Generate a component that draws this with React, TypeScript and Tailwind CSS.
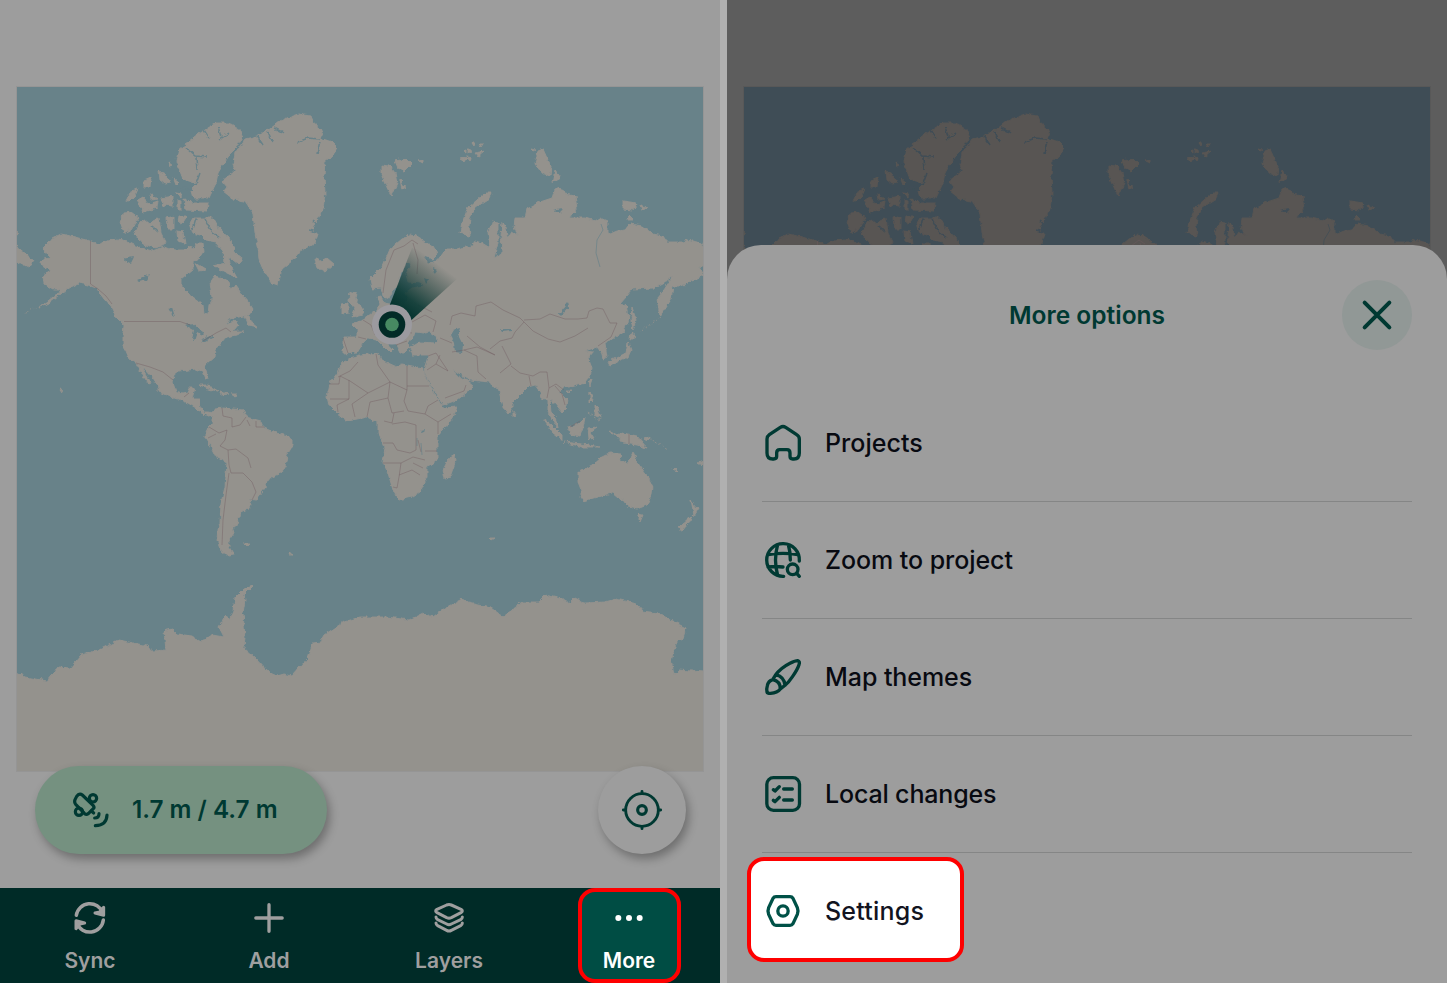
import React from "react";

const LAND = [
  // North and Central America
  "M61 234L66 235 75 237 82 239 90 241 98 244 104 242 112 240 118 239 126 241 134 245 140 247 145 249 152 251 158 249 163 246 170 249 176 250 184 250 188 246 194 249 197 243 203 243 204 252 200 258 193 262 193 269 181 279 181 286 188 293 198 301 203 305 204 313 208 314 209 305 212 299 211 289 210 282 214 276 223 278 229 283 231 289 236 286 243 296 249 303 253 309 249 315 238 317 229 319 226 324 234 320 238 325 233 331 244 331 236 335 226 337 221 343 216 350 215 357 206 365 205 368 208 378 205 379 202 371 196 369 188 370 179 371 174 375 173 383 176 392 182 394 187 393 189 388 195 388 193 395 192 399 200 399 200 407 203 412 209 412 213 413 216 408 224 407 233 409 243 410 246 417 261 421 264 428 276 433 288 436 293 440 293 445 287 455 285 467 281 473 271 477 267 482 265 488 256 500 249 499 251 505 249 509 241 511 240 517 236 518 238 521 233 530 234 533 229 540 229 547 234 555 228 556 221 550 217 540 218 530 220 523 221 503 225 487 227 463 216 457 211 447 206 438 206 433 209 427 213 423 213 415 207 416 201 412 196 408 188 403 179 399 173 398 159 392 159 387 153 378 146 370 142 367 151 383 149 384 144 377 141 372 136 363 129 359 126 352 123 347 123 333 124 325 116 317 111 307 104 299 96 288 88 285 79 283 73 286 68 288 66 292 59 295 49 303 39 308 48 301 58 293 60 289 53 289 44 284 43 276 51 271 41 264 43 259 51 258 43 249 49 243 53 238Z",
  // Greenland
  "M287 118L298 114 310 116 312 121 320 128 322 133 320 138 332 142 338 148 332 156 325 161 324 176 325 193 323 209 318 219 312 228 318 234 315 243 300 251 292 261 282 269 278 285 272 283 265 273 259 259 258 246 255 233 253 213 245 201 233 199 223 191 228 188 222 181 235 171 233 164 235 153 245 139 257 136 270 129 280 121Z",
  // Canadian Arctic
  "M216 123L229 123 241 131 243 136 236 148 228 156 218 173 216 183 209 198 193 198 191 191 198 184 183 179 176 161 179 149 188 143 199 134 208 128Z",
  "M184 199L193 203 208 203 207 211 186 210Z",
  "M193 218L213 218 219 229 229 238 236 253 242 258 238 264 228 256 231 267 237 278 223 271 213 266 224 263 223 251 216 243 206 241 200 235 193 233 190 223Z",
  "M123 213L131 212 139 218 131 229 124 233 121 224Z",
  "M139 223L145 220 150 224 153 221 159 218 161 233 166 243 156 248 143 244 134 234Z",
  "M126 201L131 191 138 189 135 196 129 202ZM136 201L143 197 149 204 158 201 157 208 144 212ZM144 181L151 178 150 187 144 187ZM159 171L165 174 171 183 165 184 160 180ZM173 177L179 182 176 185ZM161 198L173 196 173 206 163 205ZM176 193L182 194 181 197ZM177 200L181 201 181 210 177 210ZM179 216L187 216 182 224 178 222ZM166 218L174 216 174 229 168 229ZM177 231L183 232 185 244 178 242ZM195 263L206 270 199 271ZM169 163L172 165 170 166ZM151 194L157 199 152 200Z",
  "M315 259L320 261 327 258 334 264 325 272 317 268Z",
  "M199 385L208 385 218 391 208 389ZM220 392L229 394 221 395ZM232 394L236 394 235 396ZM245 316L249 316 252 323 258 328 249 326Z",
  // Svalbard and the Russian Arctic
  "M381 165L390 166 395 173 397 183 391 196 385 183 381 174ZM395 161L407 159 412 164 405 171 398 168ZM400 179L405 188 402 190ZM419 161L423 160 423 163Z",
  "M460 159L468 157 465 162ZM468 148L472 151 468 153ZM475 153L485 151 478 157ZM467 156L471 157 470 162ZM472 143L475 143 474 146ZM479 144L483 144 481 147ZM463 151L466 150 466 153Z",
  "M538 151L543 149 547 158 551 166 550 176 542 173 535 164ZM555 170L561 178 552 183ZM531 149L535 150 533 151Z",
  "M492 193L489 199 476 207 470 218 469 226 470 236 460 233 462 223 468 208 477 200 485 193Z",
  "M623 201L637 203 633 210 623 209ZM640 205L648 208 642 210ZM629 216L633 220 628 220Z",
  "M8 242L16 246 26 254 34 261 29 268 16 261 8 261ZM10 231L20 233 10 235Z",
  // Eurasia
  "M412 234L420 239 433 246 438 254 433 259 423 256 428 263 437 261 443 253 447 249 457 249 460 248 473 246 475 241 482 243 490 248 488 233 493 222 498 223 498 243 494 258 502 254 501 236 502 223 506 226 507 239 512 232 519 236 514 228 515 218 525 218 527 209 540 202 552 198 555 189 560 187 565 194 575 196 577 208 570 218 585 218 595 221 600 218 607 221 607 233 610 234 617 231 625 230 630 224 642 226 653 234 663 236 667 242 682 242 687 240 698 242 704 246 712 248 712 265 704 265 699 267 704 276 693 281 680 286 673 286 671 299 660 316 657 299 662 293 673 276 663 283 653 288 633 289 620 304 627 306 629 316 628 322 623 332 613 338 605 343 607 357 603 359 601 352 597 347 585 351 593 352 588 358 592 368 590 377 585 383 570 387 562 387 560 392 568 400 567 407 562 412 555 403 550 400 551 412 556 417 558 427 552 420 548 412 548 400 542 398 540 392 535 385 528 387 518 397 513 402 513 408 508 414 503 407 498 387 493 388 490 382 470 380 457 372 452 369 457 375 467 380 473 385 470 390 457 400 443 405 438 397 425 373 424 369 427 360 428 355 413 355 410 348 420 342 435 343 438 340 437 337 430 332 425 333 415 332 413 338 407 343 409 348 404 353 400 353 395 343 388 338 383 337 385 341 393 350 390 353 382 345 377 340 368 338 365 340 360 348 357 353 343 354 343 337 358 337 358 330 352 324 363 320 372 313 377 310 380 304 377 297 381 296 384 303 395 305 405 303 407 298 405 293 412 288 424 286 420 283 408 282 406 274 412 262 406 264 403 271 400 276 398 284 392 292 388 300 383 296 381 288 372 289 370 279 383 266 390 249 402 239Z",
  "M350 291L356 293 355 299 362 308 363 314 352 317 355 309 349 301ZM342 304L348 303 348 313 342 314Z",
  // Africa
  "M350 358L360 355 378 353 381 360 388 363 397 367 402 364 422 368 425 375 435 395 443 408 457 407 453 418 437 437 437 460 427 468 427 477 420 492 412 497 398 500 393 490 388 473 383 462 385 447 378 433 378 423 373 420 367 417 347 421 337 413 329 405 327 397 330 383 338 372 343 363Z",
  "M454 453L456 460 450 477 445 479 443 470 447 462Z",
  // South-east Asia and Japan
  "M568 427L578 424 585 417 583 428 580 436 570 434ZM543 419L552 425 562 435 562 440 553 433ZM563 442L582 444 600 447 582 447ZM588 428L597 427 590 432 594 438 589 439ZM590 393L593 400 590 403ZM595 405L598 408 601 418 595 415ZM610 431L617 435 623 433 637 436 647 448 637 445 623 443 618 437ZM589 381L592 380 590 386ZM513 411L516 415 513 417ZM631 332L637 337 630 340ZM628 343L631 350 628 357 618 361 610 366 608 362 618 357 626 353ZM632 307L636 320 633 330 631 320ZM567 391L571 391 569 393ZM644 439L651 437 647 441ZM673 467L678 472 676 472ZM698 463L703 461 701 465Z",
  // Australia and New Zealand
  "M578 472L592 465 600 458 610 453 621 454 619 459 628 463 633 451 637 462 648 477 653 487 652 494 647 505 637 509 628 507 623 500 618 498 612 493 597 497 583 501 580 497 582 492 578 482ZM637 514L643 515 640 522ZM691 500L695 507 699 508 694 516 693 510ZM692 515L690 521 683 530 678 528ZM244 544L250 544 247 547ZM289 553L292 555 290 555ZM60 389L64 391 62 392ZM490 538L495 538 492 540Z",
  // Antarctica
  "M8 668L16 672 25 677 47 681 58 667 70 668 81 655 99 650 119 640 148 646 152 651 166 650 164 631 172 629 177 634 192 636 201 642 212 635 224 637 219 627 226 615 229 620 233 610 235 598 244 589 253 586 244 595 245 600 243 613 245 637 244 648 255 658 268 672 277 676 284 674 292 676 308 658 313 643 320 642 324 635 344 622 360 617 387 617 409 620 423 613 433 617 445 608 462 599 469 603 491 608 503 617 523 602 538 602 545 595 563 599 570 603 575 598 585 603 605 602 616 599 637 604 643 611 659 613 670 620 686 628 683 638 676 643 671 660 674 675 679 670 704 672 712 672V780H8Z",
].join("");

const WATER = [
  "M453 330L460 328 458 335 463 345 462 353 455 352 454 343 450 335Z",
  "M185 325L192 323 198 328 204 332 203 335 197 332 194 341 192 340 194 330ZM202 340L213 335 213 337 203 342Z",
  "M568 302L569 307 563 314 558 315ZM123 259L134 257 131 263ZM137 280L150 274 147 280 140 282ZM168 308L172 307 175 317 172 315ZM421 430L425 429 424 433 420 434Z",
  "M553 210L562 208 560 213ZM500 329L512 329 512 331 502 332ZM433 268L437 270 434 274ZM424 278L429 280 426 284Z",
].join("");

const FJORDS =
  "M186 148L195 156 208 157M196 158L197 170M204 130L209 138M218 127L221 137M257 136L263 145M268 132L273 143M274 128L284 133M298 142L308 138 320 139M320 141L317 154M309 230L317 232M312 220L317 224M172 165L178 163M176 188L190 189M200 173L196 184M196 219L193 229M205 219L212 232 220 238M152 226L158 232M219 140L229 133";

const RIVERS = "M601 224L603 230 597 240 596 253 600 267M421 443L422 455M417 438L417 446";

const BORDERS =
  "M90.500 241V284L98 289 106 296 112 304M124 321.500H180L190 325M203 341L216 333 226 328 231 332M136 363L150 367 163 372 173 380M184 397L189 393M222 408L223 416 232 418 232 427 240 425 246 417M209 427L219 433 227 430 225 440 220 446 228 450 229 465 231 473 243 473 252 482 256 492 252 500M228 450L236 449 248 458 251 468M256 421V427L264 427M247 420L250 426M208 438L216 434M229 473L226 495 223 520 222 545M383 293L386 270 394 250 404 246 412 240 418 244M413 243L418 260 417 274M343 338L348 353M358 337L366 339M363 320L371 325 375 335M338 377L350 371 358 362M329 384H339L340 376 350 381 368 393 390 382 378 365 376 354M349 380L349 399 330 399M349 399L337 405 338 412M355 417L352 404 368 393M367 417L370 402 388 398 390 382 407 390V366M407 386H429M407 390L404 401 408 411 425 414 428 406 438 400M388 398L392 413 404 411M384 421L392 423 394 413M425 414L438 422 451 414M438 422V434M383 443H393L397 450 410 453 416 450 416 425M416 425L405 422 392 424M383 463L401 463 413 457 425 460M401 463L399 477 397 488 393 487M399 475L412 470 420 475M413 463L423 468M425 451H437M418 440L421 452M427 370L436 364 448 371M436 364L440 355M448 371L436 353 428 356M445 398L464 391 466 385M452 352L464 350 477 356 478 372 486 379M464 350L477 347 495 355 480 347 467 336M450 325L452 316 461 313 475 316 476 306 491 302 503 310 520 318 524 322 515 332 512 338 500 341 490 349M524 320L540 319 550 314 565 319 578 319 587 318 589 311 597 308 603 309 610 323 617 323 611 337 598 346M524 322L533 331 548 339 560 342 575 336 588 328M502 346L511 364 500 373M511 366L520 373 533 376 540 372 547 372 549 388 556 384 564 390M529 376L531 386M549 388L547 398M555 386L562 394 565 405M629 434V444M570 427L580 421M390 339L400 331 412 333M396 345L407 341M412 322L425 315 436 321 433 332M380 310L376 322M418 305L432 312M440 338L452 343M405 306L413 314";

function WorldMap({ sea, land, id }: { sea: string; land: string; id: string }) {
  return (
    <svg viewBox="17 87 686 684" className="block h-[684px] w-[686px] outline-1 -outline-offset-[0.500px] outline-black/5">
      <defs>
        <filter id={id} filterUnits="userSpaceOnUse" x="4" y="80" width="712" height="704">
          <feTurbulence type="fractalNoise" baseFrequency="0.2" numOctaves="3" seed="4" />
          <feDisplacementMap in="SourceGraphic" scale="4.500" xChannelSelector="R" yChannelSelector="G" />
        </filter>
      </defs>
      <rect x="16" y="86" width="688" height="686" fill={sea} />
      <g filter={`url(#${id})`}>
        <path d={LAND} fill={land} stroke={land} strokeWidth="0.900" />
        <path d={WATER} fill={sea} />
        <path d={FJORDS} fill="none" stroke={sea} strokeWidth="1.500" />
        <path d="M660 317L640 332M600 420L586 412M648 437L668 449M23 314L50 301" fill="none" stroke={land} strokeWidth="0.800" strokeDasharray="2 2" />
      </g>
      <path d={RIVERS} fill="none" stroke={sea} strokeWidth="0.700" />
      <path d={BORDERS} fill="none" stroke="#725b61" strokeWidth="0.600" strokeLinejoin="round" opacity="0.700" />
    </svg>
  );
}

function Icon({ box, size, children, width = 10 }: { box: string; size: string; children: React.ReactNode; width?: number }) {
  return (
    <svg viewBox={box} className={`shrink-0 ${size}`} fill="none" stroke="currentColor" strokeWidth={width} strokeLinecap="round" strokeLinejoin="round">
      {children}
    </svg>
  );
}

const rows = [
  {
    label: "Projects",
    spacing: "tracking-[0.03px]",
    icon: (
      <Icon box="66 65 126 126" size="size-[42px]">
        <path d="M81 116Q81 108 88 103L121 81Q129 76 137 81L170 103Q178 108 178 116V158Q178 176 162 176H158Q150 176 150 168V158Q150 148 141 148H119Q110 148 110 158V168Q110 176 101 176H98Q81 176 81 158Z" />
      </Icon>
    ),
  },
  {
    label: "Zoom to project",
    spacing: "tracking-[-0.060px]",
    icon: (
      <Icon box="66 418 126 126" size="size-[42px]">
        <path d="M178 481A49 49 0 1 0 131 527M84 462Q129 454 174 462M84 499Q106 496 129 499M113 432Q100 478 113 524M145 432Q151 452 151 478" />
        <circle cx="158" cy="506" r="16" />
        <path d="M170 518L178 527" />
      </Icon>
    ),
  },
  {
    label: "Map themes",
    spacing: "tracking-[-0.060px]",
    icon: (
      <Icon box="66 770 126 126" size="size-[42px]">
        <path d="M98 838L106 825Q122 803 150 789Q166 781 173 781Q181 783 177 793Q173 806 158 828Q146 846 135 855L121 866Q112 878 92 879Q82 879 81 875Q79 865 82 856Q85 842 98 838Q121 842 121 866M108 823Q133 830 135 855" />
      </Icon>
    ),
  },
  {
    label: "Local changes",
    spacing: "tracking-[-0.160px]",
    icon: (
      <Icon box="66 72 126 126" size="size-[42px]">
        <rect x="80.500" y="83" width="98" height="98" rx="20" />
        <path d="M100 119L105 123 118 110M131 117H157M100 151L105 155 118 142M131 150H157" />
      </Icon>
    ),
  },
];

function Row({ label, icon, spacing }: { label: string; icon: React.ReactNode; spacing: string }) {
  return (
    <div className="flex h-[117.250px] items-center gap-[21px] border-b border-[#858686] pt-[2px]">
      <span className="text-[#003a33]">{icon}</span>
      <span className={`text-[25px] font-medium text-[#080a11] ${spacing}`}>{label}</span>
    </div>
  );
}

export default function App() {
  return (
    <div className="flex h-[983px] w-[1447px] overflow-hidden bg-[#b0b0b0] font-['Inter',sans-serif]">
      <section className="relative flex w-[720px] flex-col bg-[#9d9d9d]">
        <div className="relative flex-1 pt-[87px] pl-[17px]">
          <WorldMap sea="#688289" land="#94928d" id="coast-left" />
          <svg viewBox="340 230 140 130" className="absolute top-[230px] left-[340px] h-[130px] w-[140px]">
            <defs>
              <linearGradient id="beam" gradientUnits="userSpaceOnUse" x1="402" y1="312" x2="438" y2="264">
                <stop offset="0" stopColor="#04342f" />
                <stop offset="0.250" stopColor="#0b3a35" stopOpacity="0.900" />
                <stop offset="1" stopColor="#1c3a36" stopOpacity="0" />
              </linearGradient>
            </defs>
            <path d="M387 312L412 248 436 254 458 278 406 325Z" fill="url(#beam)" />
            <circle cx="392" cy="324.500" r="20" fill="#9b9a9f" />
            <circle cx="392" cy="324.500" r="13.300" fill="#022b27" />
            <circle cx="392" cy="324.500" r="6.800" fill="#478a62" />
          </svg>
          <div className="absolute top-[766px] left-[35px] flex h-[88px] w-[292px] items-center rounded-full bg-[#759180] pl-[35px] text-[#003932] shadow-[3px_5px_10px_rgba(0,0,0,0.3)]">
            <Icon box="152 102 126 126" size="size-[42px]" width={9.5}>
              <path d="M172 124L177 119Q183 115 189 120L222 152Q226 157 222 161L207 176Q201 180 196 176L169 148Q164 142 167 134Z" />
              <circle cx="221" cy="130" r="11" />
              <circle cx="179" cy="170" r="11" />
              <path d="M216 168L223 174M239 176Q239 189 226 189M263 180Q262 211 228 212" />
            </Icon>
            <span className="-mt-px ml-[20px] text-[24.300px] font-semibold">1.7 m / 4.7 m</span>
          </div>
          <div className="absolute top-[766px] left-[597.500px] flex size-[88px] items-center justify-center rounded-full bg-[#9d9d9d] text-[#003932] shadow-[3px_5px_10px_rgba(0,0,0,0.3)]">
            <Icon box="661 102 126 126" size="size-[42px]" width={8.5}>
              <circle cx="724" cy="165" r="49" />
              <circle cx="724" cy="165" r="13" strokeWidth="9.500" />
              <path d="M724 109V115M724 215V221M668 165H674M774 165H780" />
            </Icon>
          </div>
        </div>
        <nav className="flex h-[95px] w-[719px] bg-[#002b27] text-[21px] font-semibold text-[#9f9f9f] shadow-[1px_0_0_#002b27]">
          <div className="flex flex-1 flex-col items-center pt-[13px]">
            <Icon box="158 439 102 102" size="size-[34px]" width={10.5}>
              <path d="M168 482A41 41 0 0 1 247 474M249 496A41 41 0 0 1 170 506" />
              <path d="M250 458V482L224 475 238 472ZM167 522V498L193 505 179 508Z" strokeWidth="9" fill="currentColor" />
            </Icon>
            <span className="mt-[12px] leading-[28px]">Sync</span>
          </div>
          <div className="-ml-px flex flex-1 flex-col items-center pt-[13px]">
            <Icon box="697.500 439 102 102" size="size-[34px]">
              <path d="M748.500 450V530M709 490H788" />
            </Icon>
            <span className="mt-[12px] leading-[28px]">Add</span>
          </div>
          <div className="flex flex-1 flex-col items-center pt-[13px]">
            <Icon box="97 439 102 102" size="size-[34px]" width={9}>
              <path d="M141 451Q148 448 155 451L184 464Q192 469 184 474L155 489Q148 492 141 489L112 474Q104 469 112 464ZM109 487Q109 492 114 495L141 508Q148 512 155 508L183 495Q188 492 188 487M109 505Q109 510 114 513L141 527Q148 531 155 527L183 513Q188 510 188 505" />
            </Icon>
            <span className="mt-[12px] leading-[28px]">Layers</span>
          </div>
          <div className="flex flex-1 justify-center">
            <div className="flex h-[95px] w-[103px] shrink-0 flex-col items-center rounded-[17px] border-4 border-[#fe0000] bg-[#004d44] pt-[9px] text-white">
              <Icon box="637 439 102 102" size="size-[34px]">
                <g fill="currentColor" stroke="none">
                  <circle cx="656" cy="490" r="9" />
                  <circle cx="688" cy="490" r="9" />
                  <circle cx="720" cy="490" r="9" />
                </g>
              </Icon>
              <span className="mt-[12px] leading-[28px]">More</span>
            </div>
          </div>
        </nav>
      </section>

      <section className="relative ml-[7px] w-[720px] overflow-hidden bg-[#5d5d5d]">
        <div className="pt-[87px] pl-[17px]">
          <WorldMap sea="#3f4d56" land="#585552" id="coast-right" />
        </div>
        <div className="absolute inset-x-0 top-[245px] bottom-0 rounded-t-[34px] bg-[#9d9d9d] px-[35px] pt-[35px]">
          <header className="relative flex h-[70px] items-center justify-center text-[#003932]">
            <h1 className="text-[24.500px] font-semibold">More options</h1>
            <button className="absolute right-0 flex size-[70px] items-center justify-center rounded-full bg-[#919896]">
              <Icon box="1140 203 102 102" size="size-[34px]" width={12}>
                <path d="M1154 217L1228 291M1228 217L1154 291" />
              </Icon>
            </button>
          </header>
          <div className="pt-[34.250px]">
            {rows.map((row) => (
              <Row key={row.label} label={row.label} icon={row.icon} spacing={row.spacing} />
            ))}
          </div>
          <div className="mt-[3.750px] -ml-[15px] flex h-[105px] w-[217px] items-center gap-[21px] rounded-[17px] border-4 border-[#fe0000] bg-white pt-[3px] pl-[11px]">
            <span className="text-[#005147]">
              <Icon box="66 421 126 126" size="size-[42px]">
                <path d="M108 441H150Q156 441 159 446L172 474Q176 484 172 494L159 522Q156 527 150 527H108Q102 527 99 522L86 494Q82 484 86 474L99 446Q102 441 108 441Z" />
                <circle cx="129" cy="484" r="15.500" />
              </Icon>
            </span>
            <span className="pt-px text-[25px] font-medium tracking-[0.200px] text-[#12141f]">Settings</span>
          </div>
        </div>
      </section>
    </div>
  );
}
